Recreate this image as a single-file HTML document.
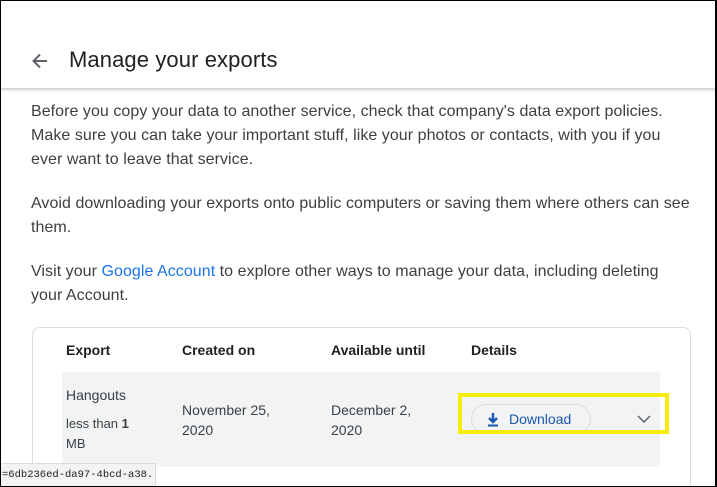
<!DOCTYPE html>
<html><head><style>
*{margin:0;padding:0;box-sizing:border-box}
html,body{width:717px;height:487px;overflow:hidden}
body{background:#fff;font-family:"Liberation Sans",Arial,sans-serif;color:#202124;position:relative}
.frame{position:absolute;left:0;top:0;width:717px;height:487px;border:1px solid #000;border-right-width:2px;z-index:10;pointer-events:none}
.hdr{position:absolute;left:0;top:0;width:717px;height:88px;background:#fff;box-shadow:0 2px 3px rgba(0,0,0,.2);z-index:2}
.hdr h1{position:absolute;left:69px;top:47px;font-size:22px;font-weight:400;color:#202124;letter-spacing:0.1px}
.hdr svg{position:absolute;left:30px;top:51px}
.p{position:absolute;left:31px;font-size:16px;line-height:24px;color:#3c4043;white-space:nowrap;letter-spacing:0.05px}
a{color:#1a73e8;text-decoration:none}
.card{position:absolute;left:32px;top:327px;width:659px;height:170px;border:1px solid #dadce0;border-radius:8px}
.th{position:absolute;top:342px;font-size:14px;font-weight:700;color:#202124}
.row{position:absolute;left:62px;top:372px;width:598px;height:95px;background:#f1f3f4}
.t{position:absolute;font-size:14px;line-height:20px;color:#3c4043}
.yb{position:absolute;left:458px;top:393px;width:211px;height:41px;border:4px solid #f6ee0a;z-index:3}
.btn{position:absolute;left:471px;top:404px;width:120px;height:30px;border:1px solid #dadce0;border-radius:15px;background:#f1f3f4;color:#1a57b0;font-size:14px;line-height:28px;padding-left:37px}
.btn svg{position:absolute;left:14px;top:7px}
.sb{position:absolute;left:0;top:463px;width:156px;height:24px;background:#f1f3f4;border:1px solid #dadce0;font-family:"Liberation Mono",monospace;font-size:10.5px;line-height:22px;color:#202124;padding-left:1px;z-index:5;white-space:nowrap;overflow:hidden}
</style></head><body>
<div class="hdr">
<svg width="20" height="20" viewBox="0 0 20 20"><path d="M17 10H4M10 3.5L3.5 10 10 16.5" fill="none" stroke="#5f6368" stroke-width="2"/></svg>
<h1>Manage your exports</h1></div>
<div class="p" style="top:100px">Before you copy your data to another service, check that company's data export policies.<br>Make sure you can take your important stuff, like your photos or contacts, with you if you<br>ever want to leave that service.</div>
<div class="p" style="top:192px">Avoid downloading your exports onto public computers or saving them where others can see<br>them.</div>
<div class="p" style="top:260px">Visit your <a>Google Account</a> to explore other ways to manage your data, including deleting<br>your Account.</div>
<div class="card"></div>
<div class="th" style="left:66px">Export</div>
<div class="th" style="left:182px">Created on</div>
<div class="th" style="left:331px">Available until</div>
<div class="th" style="left:471px">Details</div>
<div class="row"></div>
<div class="t" style="left:66px;top:385px">Hangouts</div>
<div class="t" style="left:66px;top:414px;font-size:13px">less than <b>1</b><br>MB</div>
<div class="t" style="left:182px;top:400px">November 25,<br>2020</div>
<div class="t" style="left:331px;top:400px">December 2,<br>2020</div>
<div class="yb"></div>
<div class="btn"><svg width="14" height="15" viewBox="0 0 14 15"><path d="M7 1v8M3 6l4 4 4-4" fill="none" stroke="#1a57b0" stroke-width="2.4"/><path d="M2 13.5h10" stroke="#1a57b0" stroke-width="2"/></svg>Download</div>
<svg style="position:absolute;left:637px;top:415px" width="14" height="9" viewBox="0 0 14 9"><path d="M1 1l6 6 6-6" fill="none" stroke="#5f6368" stroke-width="1.5"/></svg>
<div class="sb">=6db236ed-da97-4bcd-a38...</div>
<div class="frame"></div>
</body></html>
